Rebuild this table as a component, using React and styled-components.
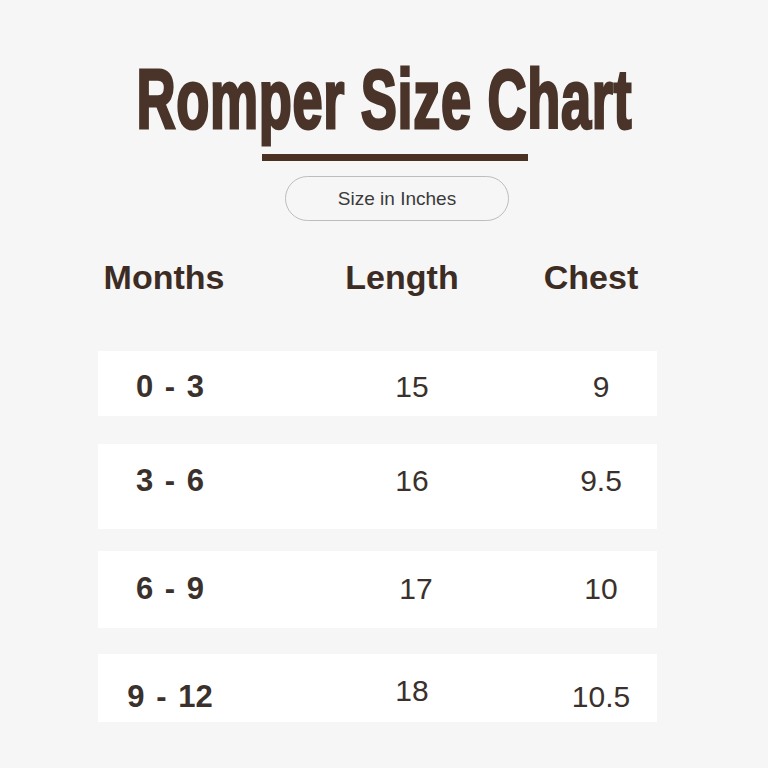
import React from "react";
import styled, { createGlobalStyle } from "styled-components";

const Global = createGlobalStyle`
  html, body { margin: 0; padding: 0; background: #f6f6f6; }
  body { font-family: "Liberation Sans", Arial, sans-serif; }
`;

const Page = styled.div`
  width: 768px;
  height: 768px;
  background: #f6f6f6;
  display: flex;
  flex-direction: column;
  align-items: center;
  padding-top: 57px;
  box-sizing: border-box;
  overflow: hidden;
`;

const Title = styled.h1`
  margin: 0;
  font-family: "Liberation Sans", Arial, sans-serif;
  font-weight: 700;
  font-size: 84px;
  line-height: 84px;
  color: #4a3429;
  white-space: nowrap;
  display: inline-block;
  transform: scaleX(0.645);
  transform-origin: center;
  -webkit-text-stroke: 3px #4a3429;
  letter-spacing: 1px;
`;

const Rule = styled.div`
  width: 266px;
  height: 7px;
  background: #4b3124;
  margin-top: 13px;
  margin-left: 22px;
`;

const Pill = styled.div`
  margin-top: 15px;
  margin-left: 26px;
  width: 224px;
  height: 45px;
  box-sizing: border-box;
  border: 1.5px solid #bdbdbd;
  border-radius: 23px;
  display: flex;
  align-items: center;
  justify-content: center;
  font-size: 19px;
  color: #3b3b3b;
`;

const Table = styled.div`
  width: 559px;
  display: flex;
  flex-direction: column;
  margin-top: 36px;
  align-self: flex-start;
  margin-left: 98px;
`;

const HeaderRow = styled.div`
  display: grid;
  grid-template-columns: 181px 266px 112px;
  margin-left: -10px;
  margin-bottom: 53px;
`;

const HeadCell = styled.div`
  text-align: center;
  font-size: 34px;
  line-height: 41px;
  font-weight: 700;
  color: #3c2c24;
  padding-right: ${(p) => (p.$first ? "29px" : "0")};
`;

const Row = styled.div`
  display: grid;
  grid-template-columns: 181px 266px 112px;
  background: #ffffff;
  padding-top: ${(p) => p.$pt}px;
  padding-bottom: ${(p) => p.$pb}px;
  margin-bottom: ${(p) => p.$mb}px;
`;

const Cell = styled.div`
  text-align: center;
  font-size: ${(p) => (p.$bold ? 31 : 30)}px;
  line-height: 30px;
  color: #3a312c;
  font-weight: ${(p) => (p.$bold ? 700 : 400)};
  word-spacing: ${(p) => (p.$bold ? "3px" : "0")};
  padding-right: ${(p) => (p.$first ? "37px" : "0")};
  position: relative;
  left: ${(p) => p.$dx || 0}px;
  top: ${(p) => p.$dy || 0}px;
`;

const rows = [
  { m: "0 - 3", l: "15", c: "9", pt: 21, pb: 14, mb: 28 },
  { m: "3 - 6", l: "16", c: "9.5", pt: 22, pb: 33, mb: 22 },
  { m: "6 - 9", l: "17", c: "10", pt: 23, pb: 24, mb: 26, ldx: 4 },
  { m: "9 - 12", l: "18", c: "10.5", pt: 28, pb: 10, mb: 0, ldy: -6 },
];

export default function App() {
  return (
    <>
      <Global />
      <Page>
        <Title>Romper Size Chart</Title>
        <Rule />
        <Pill>Size in Inches</Pill>
        <Table>
          <HeaderRow>
            <HeadCell $first>Months</HeadCell>
            <HeadCell>Length</HeadCell>
            <HeadCell>Chest</HeadCell>
          </HeaderRow>
          {rows.map((r) => (
            <Row key={r.m} $pt={r.pt} $pb={r.pb} $mb={r.mb}>
              <Cell $bold $first>{r.m}</Cell>
              <Cell $dx={r.ldx} $dy={r.ldy}>{r.l}</Cell>
              <Cell>{r.c}</Cell>
            </Row>
          ))}
        </Table>
      </Page>
    </>
  );
}
